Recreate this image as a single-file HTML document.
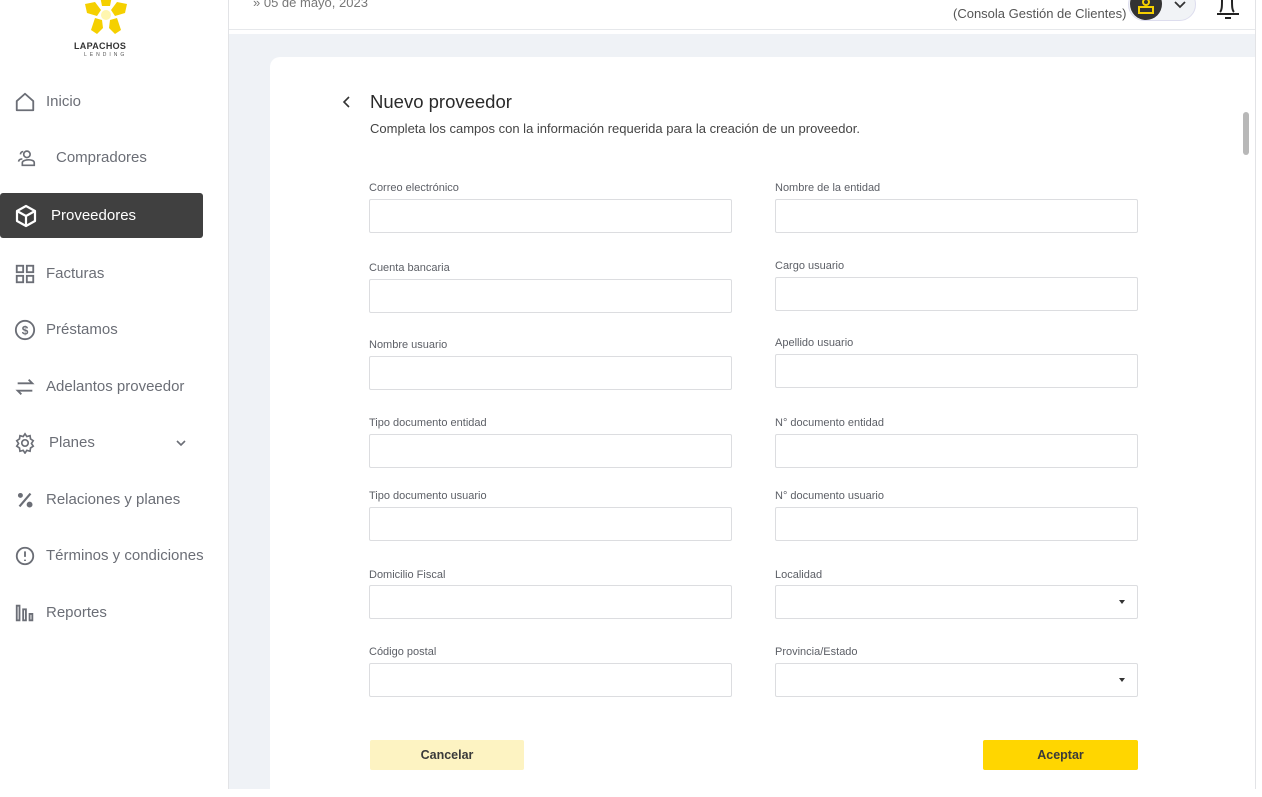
<!DOCTYPE html>
<html><head><meta charset="utf-8"><style>
*{box-sizing:border-box;margin:0;padding:0}
body{width:1262px;height:789px;overflow:hidden;background:#fff;font-family:"Liberation Sans",sans-serif;position:relative}
.abs{position:absolute}
.nav{position:absolute;left:0;width:203px;height:45px;display:flex;align-items:center;color:#6b6e76;font-size:15px;white-space:nowrap}
.nav svg{position:absolute;left:14px}
.lbl{position:absolute;font-size:11px;color:#5c5f66;white-space:nowrap}
.box{position:absolute;height:34px;border:1.5px solid #dcdde0;border-radius:2px;background:#fff}
.caret{position:absolute;right:12px;top:14px;width:0;height:0;border-left:3.5px solid transparent;border-right:3.5px solid transparent;border-top:4px solid #333}
</style></head><body>
<div class="abs" style="left:228px;top:0;width:1px;height:789px;background:#e2e3e6"></div>
<svg class="abs" style="left:83px;top:-4px" width="46" height="42" viewBox="0 0 46 42">
<g fill="#f5d000">
<path d="M17 0h12l-2 10h-8z"/>
<path d="M2 8l10-2 6 8-4 6-10-3z"/>
<path d="M44 8l-10-2-6 8 4 6 10-3z"/>
<path d="M8 34l4-12 7 2 1 8-6 6z"/>
<path d="M38 34l-4-12-7 2-1 8 6 6z"/>
</g><circle cx="23" cy="19" r="5" fill="#fff6b0"/></svg>
<div class="abs" style="left:74px;top:41px;font-size:9px;font-weight:bold;color:#333;letter-spacing:.3px">LAPACHOS</div>
<div class="abs" style="left:84px;top:52px;font-size:5px;color:#555;letter-spacing:3px">LENDING</div>

<div class="nav" style="top:79px"><svg width="22" height="22" viewBox="0 0 24 24" fill="none" stroke="#6b6e76" stroke-width="2" stroke-linejoin="round"><path d="M3 11L12 3l9 8v10H3z"/></svg><span style="margin-left:46px">Inicio</span></div>
<div class="nav" style="top:135px"><svg width="24" height="22" viewBox="0 0 24 24" fill="none" stroke="#6b6e76" stroke-width="1.8"><circle cx="13" cy="8" r="3.5"/><path d="M9 5a3 3 0 0 0-3 3M4 16c0-2 2-3 4-3M8 20h13v-3c0-2-3-3-6-3s-7 1-7 3z"/></svg><span style="margin-left:56px">Compradores</span></div>
<div class="nav" style="top:193px;background:#404040;border-radius:3px;color:#fff"><svg width="24" height="24" viewBox="0 0 24 24" fill="none" stroke="#fff" stroke-width="2.2" stroke-linejoin="round"><path d="M12 2l9 5v10l-9 5-9-5V7z"/><path d="M3 7l9 5 9-5M12 12v10"/></svg><span style="margin-left:51px">Proveedores</span></div>
<div class="nav" style="top:251px"><svg width="22" height="22" viewBox="0 0 24 24" fill="none" stroke="#6b6e76" stroke-width="2"><rect x="3" y="3" width="7" height="7"/><rect x="14" y="3" width="7" height="7"/><rect x="3" y="14" width="7" height="7"/><rect x="14" y="14" width="7" height="7"/></svg><span style="margin-left:46px">Facturas</span></div>
<div class="nav" style="top:307px"><svg width="22" height="22" viewBox="0 0 24 24" fill="none" stroke="#6b6e76" stroke-width="2"><circle cx="12" cy="12" r="10"/><text x="12" y="17" text-anchor="middle" font-size="13" fill="#6b6e76" stroke="none" font-family="Liberation Sans" font-weight="bold">$</text></svg><span style="margin-left:46px">Préstamos</span></div>
<div class="nav" style="top:364px"><svg width="22" height="22" viewBox="0 0 24 24" fill="none" stroke="#6b6e76" stroke-width="2"><path d="M4 8h16l-4-4M20 16H4l4 4"/></svg><span style="margin-left:46px">Adelantos proveedor</span></div>
<div class="nav" style="top:420px"><svg width="22" height="22" viewBox="0 0 24 24" fill="none" stroke="#6b6e76" stroke-width="1.8"><circle cx="12" cy="12" r="3.5"/><path d="M12 2l2 3 3.5-1 .5 3.5 3 2-2 3 2 3-3 2-.5 3.5L14 20l-2 3-2-3-3.5 1-.5-3.5-3-2 2-3-2-3 3-2L6.5 4 10 5z"/></svg><span style="margin-left:49px">Planes</span><svg style="left:174px" width="14" height="14" viewBox="0 0 14 14" fill="none" stroke="#6b6e76" stroke-width="1.6"><path d="M3 5l4 4 4-4"/></svg></div>
<div class="nav" style="top:477px"><svg width="22" height="22" viewBox="0 0 24 24" fill="none" stroke="#6b6e76" stroke-width="2.4"><path d="M18 5L6 19"/><circle cx="7" cy="7" r="1.5" fill="#6b6e76"/><circle cx="17" cy="17" r="2" fill="#6b6e76"/></svg><span style="margin-left:46px">Relaciones y planes</span></div>
<div class="nav" style="top:533px"><svg width="22" height="22" viewBox="0 0 24 24" fill="none" stroke="#6b6e76" stroke-width="2"><circle cx="12" cy="12" r="9"/><path d="M12 7v6M12 16v1.5"/></svg><span style="margin-left:46px">Términos y condiciones</span></div>
<div class="nav" style="top:590px"><svg width="22" height="22" viewBox="0 0 24 24" fill="none" stroke="#6b6e76" stroke-width="2"><rect x="3" y="4" width="3" height="16"/><rect x="10" y="8" width="3" height="12"/><rect x="17" y="13" width="3" height="7"/></svg><span style="margin-left:46px">Reportes</span></div>

<div class="abs" style="left:229px;top:0;width:1026px;height:30px;background:#fff;border-bottom:1px solid #e6e8eb"></div>
<div class="abs" style="left:253px;top:-5px;font-size:13px;color:#777">&#187; 05 de mayo, 2023</div>
<div class="abs" style="left:953px;top:6px;font-size:13px;color:#555">(Consola Gestión de Clientes)</div>
<div class="abs" style="left:1128px;top:-12px;width:68px;height:33px;border-radius:17px;background:#f1f3f6;border:1px solid #dde"></div>
<div class="abs" style="left:1130px;top:-12px;width:32px;height:32px;border-radius:50%;background:#333"></div>
<svg class="abs" style="left:1136px;top:0" width="20" height="16" viewBox="0 0 20 16" fill="none" stroke="#f5d000" stroke-width="2"><circle cx="10" cy="2" r="3"/><rect x="3" y="7" width="14" height="6"/></svg>
<svg class="abs" style="left:1173px;top:0" width="14" height="10" viewBox="0 0 14 10" fill="none" stroke="#333" stroke-width="1.8"><path d="M2 2l5 5 5-5"/></svg>
<svg class="abs" style="left:1214px;top:0" width="28" height="20" viewBox="0 0 28 20" fill="none" stroke="#222" stroke-width="2"><path d="M6 12c2-2 2-6 2-12M20 12c-2-2-2-6-2-12M3 14h22"/><path d="M11 18h6"/></svg>

<div class="abs" style="left:229px;top:34px;width:1026px;height:755px;background:#eff2f6"></div>
<div class="abs" style="left:1255px;top:0;width:1px;height:789px;background:#e2e3e6"></div>
<div class="abs" style="left:270px;top:57px;width:985px;height:740px;background:#fff;border-radius:10px 0 0 0"></div>
<div class="abs" style="left:1243px;top:112px;width:6px;height:43px;border-radius:3px;background:#b8b8b8"></div>

<svg class="abs" style="left:341px;top:95px" width="12" height="14" viewBox="0 0 12 14" fill="none" stroke="#333" stroke-width="1.6"><path d="M8 2L3 7l5 5"/></svg>
<div class="abs" style="left:370px;top:91px;font-size:18.5px;color:#2a2a2a">Nuevo proveedor</div>
<div class="abs" style="left:370px;top:121px;font-size:13px;color:#444">Completa los campos con la información requerida para la creación de un proveedor.</div>

<div class="lbl" style="left:369px;top:182px">Correo electrónico</div><div class="box" style="left:369px;top:199px;width:363px"></div>
<div class="lbl" style="left:775px;top:182px">Nombre de la entidad</div><div class="box" style="left:775px;top:199px;width:363px"></div>
<div class="lbl" style="left:369px;top:262px">Cuenta bancaria</div><div class="box" style="left:369px;top:279px;width:363px"></div>
<div class="lbl" style="left:775px;top:260px">Cargo usuario</div><div class="box" style="left:775px;top:277px;width:363px"></div>
<div class="lbl" style="left:369px;top:339px">Nombre usuario</div><div class="box" style="left:369px;top:356px;width:363px"></div>
<div class="lbl" style="left:775px;top:337px">Apellido usuario</div><div class="box" style="left:775px;top:354px;width:363px"></div>
<div class="lbl" style="left:369px;top:417px">Tipo documento entidad</div><div class="box" style="left:369px;top:434px;width:363px"></div>
<div class="lbl" style="left:775px;top:417px">N° documento entidad</div><div class="box" style="left:775px;top:434px;width:363px"></div>
<div class="lbl" style="left:369px;top:490px">Tipo documento usuario</div><div class="box" style="left:369px;top:507px;width:363px"></div>
<div class="lbl" style="left:775px;top:490px">N° documento usuario</div><div class="box" style="left:775px;top:507px;width:363px"></div>
<div class="lbl" style="left:369px;top:569px">Domicilio Fiscal</div><div class="box" style="left:369px;top:585px;width:363px"></div>
<div class="lbl" style="left:775px;top:569px">Localidad</div><div class="box" style="left:775px;top:585px;width:363px"><div class="caret"></div></div>
<div class="lbl" style="left:369px;top:646px">Código postal</div><div class="box" style="left:369px;top:663px;width:363px"></div>
<div class="lbl" style="left:775px;top:646px">Provincia/Estado</div><div class="box" style="left:775px;top:663px;width:363px"><div class="caret"></div></div>

<div class="abs" style="left:370px;top:740px;width:154px;height:30px;background:#fdf3c2;border-radius:2px;font-size:12.5px;font-weight:bold;color:#3a3a3a;text-align:center;line-height:30px">Cancelar</div>
<div class="abs" style="left:983px;top:740px;width:155px;height:30px;background:#ffd600;border-radius:2px;font-size:12.5px;font-weight:bold;color:#3a3a3a;text-align:center;line-height:30px">Aceptar</div>
</body></html>
